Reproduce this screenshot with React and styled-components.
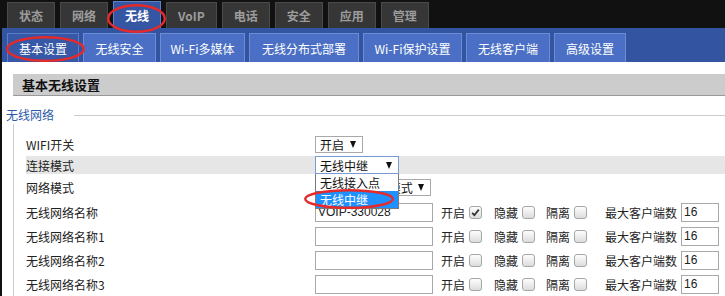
import React from "react";
import styled, { createGlobalStyle, css } from "styled-components";

const GlobalStyle = createGlobalStyle`
  html, body {
    margin: 0;
    padding: 0;
    background: #ffffff;
  }
  body {
    font-family: "Noto Sans CJK SC", "Liberation Sans", sans-serif;
    font-size: 12px;
    color: #222;
  }
`;

const Page = styled.div`
  position: relative;
  width: 723px;
  height: 296px;
  overflow: hidden;
  border-left: 2px solid #111;
  background: #fff;
`;

const TopBar = styled.div`
  display: flex;
  align-items: flex-end;
  gap: 5px;
  height: 28px;
  margin-left: -2px;
  padding-left: 7px;
  background: #111;
`;

const TopTab = styled.div`
  display: flex;
  align-items: center;
  justify-content: center;
  box-sizing: border-box;
  height: 26px;
  padding: 0 11px;
  border: 1px solid #4a4a4a;
  border-bottom: none;
  background: #363636;
  color: #9c9c9c;
  font-weight: bold;
  font-size: 12px;
  ${props =>
    props.$active &&
    css`
      height: 27px;
      background: #3556a2;
      border-color: #5d7fcc;
      color: #ffffff;
    `};
`;

const SubBar = styled.div`
  display: flex;
  align-items: flex-end;
  gap: 4px;
  box-sizing: border-box;
  height: 34px;
  padding-left: 5px;
  background: #3354a0;
`;

const SubTab = styled.div`
  display: flex;
  align-items: center;
  justify-content: center;
  box-sizing: border-box;
  width: ${props => props.$w}px;
  height: 29px;
  border: 1px solid #6a8dd6;
  border-bottom: none;
  background: #4a6fc4;
  color: #ffffff;
  font-size: 12px;
  ${props =>
    props.$active &&
    css`
      background: #3658a6;
      border-color: #5b7ecb;
    `};
`;

const Content = styled.div`
  padding: 12px 0 0 11px;
`;

const SectionHead = styled.div`
  height: 21px;
  line-height: 21px;
  padding-left: 9px;
  background: #cccccc;
  border-bottom: 1px solid #999;
  font-weight: bold;
  font-size: 13px;
  color: #111;
`;

const LegendRow = styled.div`
  display: flex;
  align-items: center;
  height: 18px;
  margin: 10px 0 0 -7px;
`;

const Legend = styled.span`
  color: #2c5aa8;
  font-size: 12px;
  line-height: 18px;
`;

const LegendLine = styled.div`
  flex: 1;
  height: 1px;
  margin-left: 20px;
  background: #cccccc;
`;

const FieldBody = styled.div`
  border-left: 1px solid #cccccc;
  padding: 8px 0 0 12px;
`;

const Row = styled.div`
  display: flex;
  align-items: center;
  height: ${props => props.$h || 24}px;
  background: ${props => (props.$hl ? "#e6e6e6" : "transparent")};
`;

const Label = styled.div`
  width: 289px;
  flex-shrink: 0;
  color: #222;
  font-size: 12px;
`;

const SelectWrap = styled.div`
  position: relative;
`;

const Select = styled.div`
  display: flex;
  align-items: center;
  justify-content: space-between;
  box-sizing: border-box;
  width: ${props => props.$w}px;
  height: ${props => props.$h || 17}px;
  padding: 0 6px 0 4px;
  border: 1px solid ${props => (props.$focus ? "#7a9bcf" : "#a9a9a9")};
  background: #fff;
  font-size: 12px;
  color: #111;
  white-space: nowrap;
  overflow: hidden;
`;

const Arrow = styled.span`
  flex-shrink: 0;
  width: 0;
  height: 0;
  border-left: 3.5px solid transparent;
  border-right: 3.5px solid transparent;
  border-top: 7px solid #111;
`;

const DropList = styled.div`
  position: absolute;
  top: 100%;
  left: 0;
  z-index: 5;
  box-sizing: border-box;
  width: 84px;
  border: 1px solid #7a7a7a;
  border-top: none;
  background: #fff;
`;

const DropItem = styled.div`
  height: 17px;
  line-height: 17px;
  padding-left: 4px;
  font-size: 12px;
  color: ${props => (props.$sel ? "#fff" : "#111")};
  background: ${props => (props.$sel ? "#1e90ff" : "#fff")};
`;

const TextBox = styled.div`
  box-sizing: border-box;
  width: ${props => props.$w}px;
  height: 19px;
  line-height: 17px;
  padding-left: 2px;
  margin-right: ${props => props.$mr || 0}px;
  border: 1px solid #a9a9a9;
  background: #fff;
  font-family: "Liberation Sans", Arial, sans-serif;
  font-size: 12px;
  color: #222;
`;

const Opt = styled.span`
  margin-left: ${props => props.$ml}px;
  font-size: 12px;
  color: #222;
`;

const Check = styled.span`
  display: inline-flex;
  align-items: center;
  justify-content: center;
  box-sizing: border-box;
  width: 13px;
  height: 13px;
  margin-left: 4px;
  border: 1px solid #a6a6a6;
  border-radius: 3px;
  background: linear-gradient(#fdfdfd, #dcdcdc);
`;

const Annotation = styled.svg`
  position: absolute;
  left: ${props => props.$x}px;
  top: ${props => props.$y}px;
  z-index: 10;
  pointer-events: none;
  overflow: visible;
`;

const topTabs = ["状态", "网络", "无线", "VoIP", "电话", "安全", "应用", "管理"];

const subTabs = [
  { label: "基本设置", w: 72 },
  { label: "无线安全", w: 73 },
  { label: "Wi-Fi多媒体", w: 85 },
  { label: "无线分布式部署", w: 110 },
  { label: "Wi-Fi保护设置", w: 99 },
  { label: "无线客户端", w: 84 },
  { label: "高级设置", w: 72 }
];

const ssids = [
  { name: "无线网络名称", value: "VOIP-330028", on: true },
  { name: "无线网络名称1", value: "", on: false },
  { name: "无线网络名称2", value: "", on: false },
  { name: "无线网络名称3", value: "", on: false }
];

function Ring({ x, y, w, h }) {
  return (
    <Annotation $x={x} $y={y} width={w} height={h}>
      <ellipse
        cx={w / 2}
        cy={h / 2}
        rx={w / 2 - 1.2}
        ry={h / 2 - 1.2}
        fill="none"
        stroke="#e42a2a"
        strokeWidth="2.4"
      />
    </Annotation>
  );
}

function CheckBox({ checked }) {
  return (
    <Check>
      {checked && (
        <svg width="9" height="9" viewBox="0 0 9 9">
          <path d="M1.2 4.8 L3.4 7.2 L7.8 1.6" fill="none" stroke="#333" strokeWidth="1.8" />
        </svg>
      )}
    </Check>
  );
}

function SsidRow({ item }) {
  return (
    <Row>
      <Label>{item.name}</Label>
      <TextBox $w={118}>{item.value}</TextBox>
      <Opt $ml={8}>开启</Opt>
      <CheckBox checked={item.on} />
      <Opt $ml={12}>隐藏</Opt>
      <CheckBox />
      <Opt $ml={11}>隔离</Opt>
      <CheckBox />
      <Opt $ml={18}>最大客户端数</Opt>
      <TextBox $w={38} style={{ marginLeft: 4 }}>16</TextBox>
    </Row>
  );
}

export default function App() {
  return (
    <>
      <GlobalStyle />
      <Page>
        <TopBar>
          {topTabs.map(t => (
            <TopTab key={t} $active={t === "无线"}>
              {t}
            </TopTab>
          ))}
        </TopBar>
        <SubBar>
          {subTabs.map((t, i) => (
            <SubTab key={t.label} $w={t.w} $active={i === 0}>
              {t.label}
            </SubTab>
          ))}
        </SubBar>
        <Content>
          <SectionHead>基本无线设置</SectionHead>
          <LegendRow>
            <Legend>无线网络</Legend>
            <LegendLine />
          </LegendRow>
          <FieldBody>
            <Row>
              <Label>WIFI开关</Label>
              <Select $w={48}>
                开启
                <Arrow />
              </Select>
            </Row>
            <Row $h={18} $hl>
              <Label>连接模式</Label>
              <SelectWrap>
                <Select $w={84} $h={18} $focus>
                  无线中继
                  <Arrow />
                </Select>
                <DropList>
                  <DropItem>无线接入点</DropItem>
                  <DropItem $sel>无线中继</DropItem>
                </DropList>
              </SelectWrap>
            </Row>
            <Row $h={26}>
              <Label>网络模式</Label>
              <Select $w={116}>
                11b/g/n混合模式
                <Arrow />
              </Select>
            </Row>
            {ssids.map(s => (
              <SsidRow key={s.name} item={s} />
            ))}
          </FieldBody>
        </Content>
        <Ring x={105} y={4} w={59} h={29} />
        <Ring x={4} y={36} w={79} h={26} />
        <Ring x={302} y={189} w={90} h={20} />
      </Page>
    </>
  );
}
